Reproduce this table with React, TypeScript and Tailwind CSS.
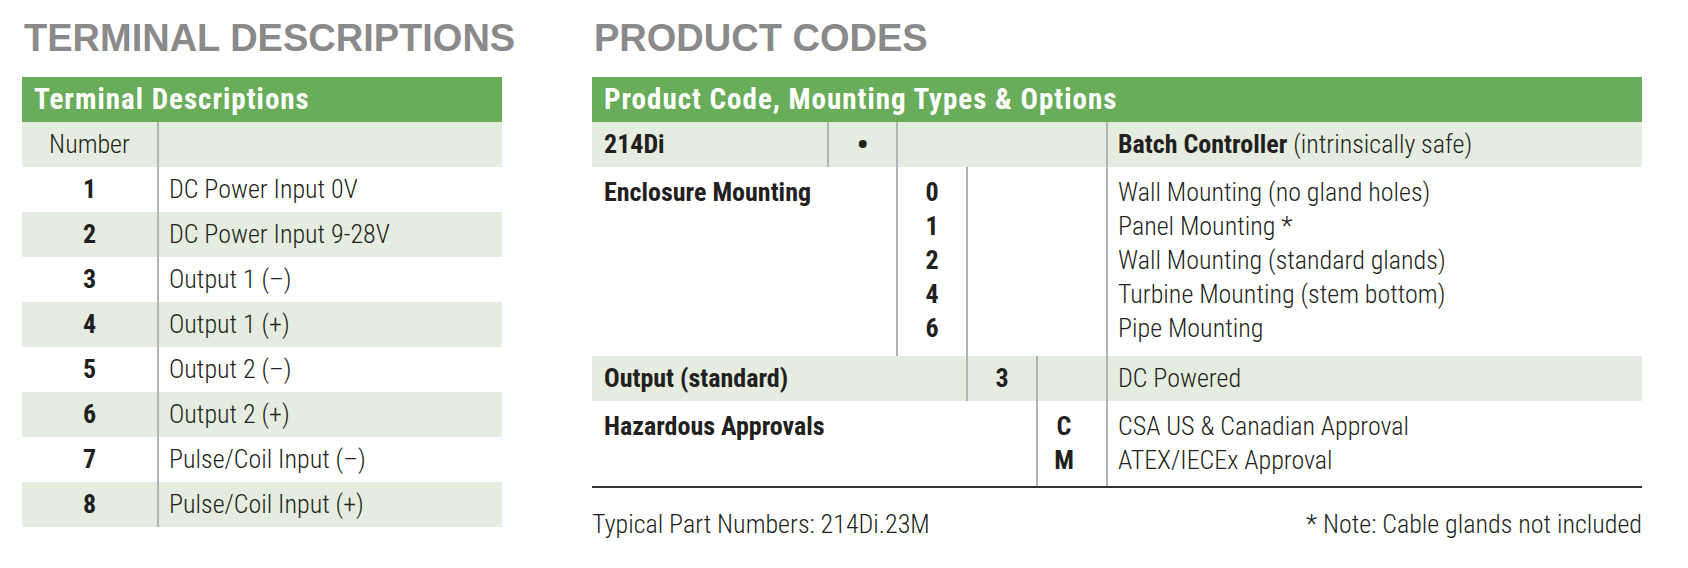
const terminals = [
  ["1", "DC Power Input 0V"],
  ["2", "DC Power Input 9-28V"],
  ["3", "Output 1 (–)"],
  ["4", "Output 1 (+)"],
  ["5", "Output 2 (–)"],
  ["6", "Output 2 (+)"],
  ["7", "Pulse/Coil Input (–)"],
  ["8", "Pulse/Coil Input (+)"],
];

const mounting = [
  ["0", "Wall Mounting (no gland holes)"],
  ["1", "Panel Mounting *"],
  ["2", "Wall Mounting (standard glands)"],
  ["4", "Turbine Mounting (stem bottom)"],
  ["6", "Pipe Mounting"],
];

const cols = "grid grid-cols-[235px_69px_70px_70px_70px_1fr]";
const line = "border-l-2 border-[#b4b4b4]";

const Heading = ({ children }: { children: string }) => (
  <h2 className="whitespace-nowrap text-[38px] leading-[38px] font-bold text-[#8a8a8a] font-['Liberation_Sans',Arial,sans-serif] mb-[20px] pl-[2px]">
    {children}
  </h2>
);

const TableTitle = ({ children }: { children: string }) => (
  <div className="h-[45px] bg-[#69ac59] text-white font-bold text-[29px] leading-[45px] tracking-[1px] pl-3 whitespace-nowrap">
    {children}
  </div>
);

const TerminalTable = () => (
  <div className="w-[480px]">
    <Heading>TERMINAL DESCRIPTIONS</Heading>
    <TableTitle>Terminal Descriptions</TableTitle>
    <div className="flex h-[45px] bg-[#e4eddf]">
      <div className="w-[135px] text-center">Number</div>
      <div className={`flex-1 ${line}`}></div>
    </div>
    {terminals.map(([num, desc], i) => (
      <div key={num} className={`flex h-[45px] ${i % 2 === 1 ? "bg-[#e4eddf]" : ""}`}>
        <div className="w-[135px] text-center font-bold">{num}</div>
        <div className={`flex-1 pl-[10px] ${line}`}>{desc}</div>
      </div>
    ))}
  </div>
);

const ProductTable = () => (
  <div className="w-[1050px]">
    <Heading>PRODUCT CODES</Heading>
    <TableTitle>Product Code, Mounting Types &amp; Options</TableTitle>

    {/* 214Di */}
    <div className={`${cols} h-[45px] bg-[#e4eddf]`}>
      <div className="pl-3 font-bold">214Di</div>
      <div className={`${line} text-center font-bold text-[34px]`}>•</div>
      <div className={`${line} col-span-3`}></div>
      <div className={`${line} pl-[10px]`}>
        <span className="font-bold">Batch Controller</span> (intrinsically safe)
      </div>
    </div>

    {/* Enclosure Mounting */}
    <div className={`${cols} leading-[34px]`}>
      <div className="col-span-2 pl-3 pt-[8px] pb-[11px] font-bold">Enclosure Mounting</div>
      <div className={`${line} pt-[8px] pb-[11px] text-center font-bold`}>
        {mounting.map(([code]) => (
          <div key={code}>{code}</div>
        ))}
      </div>
      <div className={`${line} col-span-2`}></div>
      <div className={`${line} pl-[10px] pt-[8px] pb-[11px]`}>
        {mounting.map(([code, desc]) => (
          <div key={code}>{desc}</div>
        ))}
      </div>
    </div>

    {/* Output */}
    <div className={`${cols} h-[45px] bg-[#e4eddf]`}>
      <div className="col-span-3 pl-3 font-bold">Output (standard)</div>
      <div className={`${line} text-center font-bold`}>3</div>
      <div className={line}></div>
      <div className={`${line} pl-[10px]`}>DC Powered</div>
    </div>

    {/* Hazardous */}
    <div className={`${cols} leading-[34px] border-b-2 border-[#333333]`}>
      <div className="col-span-4 pl-3 pt-[8px] pb-[9px] font-bold">Hazardous Approvals</div>
      <div className={`${line} pt-[8px] pb-[9px] pr-[16px] text-center font-bold`}>
        <div>C</div>
        <div>M</div>
      </div>
      <div className={`${line} pl-[10px] pt-[8px] pb-[9px]`}>
        <div>CSA US &amp; Canadian Approval</div>
        <div>ATEX/IECEx Approval</div>
      </div>
    </div>

    <div className="flex justify-between mt-[14px]">
      <span>Typical Part Numbers: 214Di.23M</span>
      <span>* Note: Cable glands not included</span>
    </div>
  </div>
);

export default function App() {
  return (
    <div className="w-[1688px] h-[568px] bg-white overflow-hidden flex pt-[19px] pl-[22px] gap-[90px] text-[#231f20] text-[26px] leading-[45px] font-light font-['Roboto_Condensed','Roboto',sans-serif]">
      <TerminalTable />
      <ProductTable />
    </div>
  );
}
